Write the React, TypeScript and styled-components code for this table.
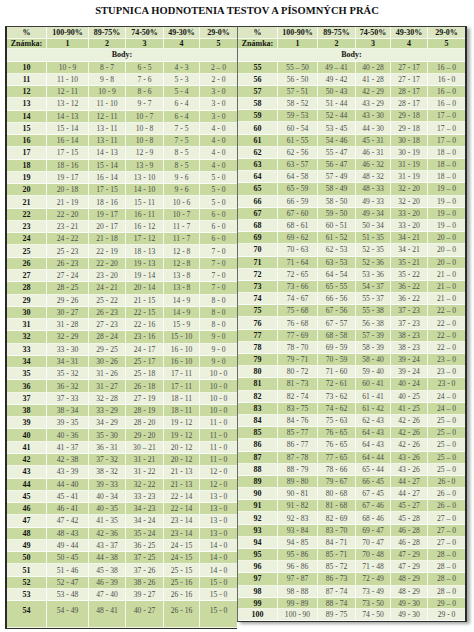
import React from "react";
import styled, { createGlobalStyle } from "styled-components";

const Global = createGlobalStyle`
  html, body { margin: 0; padding: 0; background: #ffffff; }
  body { font-family: "Liberation Serif", "Times New Roman", serif; }
`;

type R = [string, string, string, string, string, string];

const leftRows: R[] = [
  ["10", "10 - 9", "8 - 7", "6 - 5", "4 - 3", "2 – 0"],
  ["11", "11 - 10", "9 - 8", "7 - 6", "5 - 3", "2 - 0"],
  ["12", "12 - 11", "10 - 9", "8 - 6", "5 - 4", "3 - 0"],
  ["13", "13 - 12", "11 - 10", "9 - 7", "6 - 4", "3 - 0"],
  ["14", "14 - 13", "12 - 11", "10 - 7", "6 - 4", "3 - 0"],
  ["15", "15 - 14", "13 - 11", "10 - 8", "7 - 5", "4 - 0"],
  ["16", "16 - 14", "13 - 11", "10 - 8", "7 - 5", "4 - 0"],
  ["17", "17 - 15", "14 - 13", "12 - 9", "8 - 5", "4 - 0"],
  ["18", "18 - 16", "15 - 14", "13 - 9", "8 - 5", "4 - 0"],
  ["19", "19 - 17", "16 - 14", "13 - 10", "9 - 6", "5 - 0"],
  ["20", "20 - 18", "17 - 15", "14 - 10", "9 - 6", "5 - 0"],
  ["21", "21 - 19", "18 - 16", "15 - 11", "10 - 6", "5 - 0"],
  ["22", "22 - 20", "19 - 17", "16 - 11", "10 - 7", "6 - 0"],
  ["23", "23 - 21", "20 - 17", "16 - 12", "11 - 7", "6 - 0"],
  ["24", "24 - 22", "21 - 18", "17 - 12", "11 - 7", "6 - 0"],
  ["25", "25 - 23", "22 - 19", "18 - 13", "12 - 8", "7 - 0"],
  ["26", "26 - 23", "22 - 20", "19 - 13", "12 - 8", "7 - 0"],
  ["27", "27 - 24", "23 - 20", "19 - 14", "13 - 8", "7 - 0"],
  ["28", "28 - 25", "24 - 21", "20 - 14", "13 - 8", "7 - 0"],
  ["29", "29 - 26", "25 - 22", "21 - 15", "14 - 9", "8 - 0"],
  ["30", "30 - 27", "26 - 23", "22 - 15", "14 - 9", "8 - 0"],
  ["31", "31 - 28", "27 - 23", "22 - 16", "15 - 9", "8 - 0"],
  ["32", "32 - 29", "28 - 24", "23 - 16", "15 - 10", "9 - 0"],
  ["33", "33 - 30", "29 - 25", "24 - 17", "16 - 10", "9 - 0"],
  ["34", "34 - 31", "30 - 26", "25 - 17", "16 - 10", "9 - 0"],
  ["35", "35 - 32", "31 - 26", "25 - 18", "17 - 11", "10 - 0"],
  ["36", "36 - 32", "31 - 27", "26 - 18", "17 - 11", "10 - 0"],
  ["37", "37 - 33", "32 - 28", "27 - 19", "18 - 11", "10 - 0"],
  ["38", "38 - 34", "33 - 29", "28 - 19", "18 - 11", "10 - 0"],
  ["39", "39 - 35", "34 - 29", "28 - 20", "19 - 12", "11 - 0"],
  ["40", "40 - 36", "35 - 30", "29 - 20", "19 - 12", "11 - 0"],
  ["41", "41 - 37", "36 - 31", "30 – 21", "20 - 12", "11 - 0"],
  ["42", "42 - 38", "37 - 32", "31 - 21", "20 - 12", "11 - 0"],
  ["43", "43 - 39", "38 - 32", "31 - 22", "21 - 13", "12 - 0"],
  ["44", "44 - 40", "39 - 33", "32 - 22", "21 - 13", "12 - 0"],
  ["45", "45 - 41", "40 - 34", "33 - 23", "22 - 14", "13 - 0"],
  ["46", "46 - 41", "40 - 35", "34 - 23", "22 - 14", "13 - 0"],
  ["47", "47 - 42", "41 - 35", "34 - 24", "23 - 14", "13 - 0"],
  ["48", "48 - 43", "42 - 36", "35 - 24", "23 - 14", "13 - 0"],
  ["49", "49 - 44", "43 - 37", "36 - 25", "24 - 15", "14 - 0"],
  ["50", "50 - 45", "44 - 38", "37 - 25", "24 - 15", "14 - 0"],
  ["51", "51 - 46", "45 - 38", "37 - 26", "25 - 15", "14 - 0"],
  ["52", "52 - 47", "46 - 39", "38 - 26", "25 - 16", "15 - 0"],
  ["53", "53 - 48", "47 - 40", "39 - 27", "26 - 16", "15 - 0"],
  ["54", "54 - 49", "48 - 41", "40 - 27", "26 - 16", "15 - 0"],
];

const rightRows: R[] = [
  ["55", "55 – 50", "49 – 41", "40 - 28", "27 - 17", "16 – 0"],
  ["56", "56 - 50", "49 - 42", "41 - 28", "27 - 17", "16 - 0"],
  ["57", "57 - 51", "50 - 43", "42 - 29", "28 - 17", "16 – 0"],
  ["58", "58 - 52", "51 - 44", "43 - 29", "28 - 17", "16 – 0"],
  ["59", "59 - 53", "52 - 44", "43 - 30", "29 - 18", "17 – 0"],
  ["60", "60 - 54", "53 - 45", "44 - 30", "29 - 18", "17 – 0"],
  ["61", "61 - 55", "54 - 46", "45 - 31", "30 - 18", "17 – 0"],
  ["62", "62 - 56", "55 - 47", "46 - 31", "30 - 19", "18 – 0"],
  ["63", "63 - 57", "56 - 47", "46 - 32", "31 - 19", "18 – 0"],
  ["64", "64 - 58", "57 - 49", "48 - 32", "31 - 19", "18 – 0"],
  ["65", "65 - 59", "58 - 49", "48 - 33", "32 - 20", "19 – 0"],
  ["66", "66 - 59", "58 - 50", "49 - 33", "32 - 20", "19 – 0"],
  ["67", "67 - 60", "59 - 50", "49 - 34", "33 - 20", "19 – 0"],
  ["68", "68 - 61", "60 - 51", "50 - 34", "33 - 20", "19 – 0"],
  ["69", "69 - 62", "61 - 52", "51 - 35", "34 - 21", "20 – 0"],
  ["70", "70 - 63", "62 - 53", "52 - 35", "34 - 21", "20 – 0"],
  ["71", "71 - 64", "63 - 53", "52 - 36", "35 - 21", "20 – 0"],
  ["72", "72 - 65", "64 - 54", "53 - 36", "35 - 22", "21 – 0"],
  ["73", "73 - 66", "65 - 55", "54 - 37", "36 - 22", "21 – 0"],
  ["74", "74 - 67", "66 - 56", "55 - 37", "36 - 22", "21 – 0"],
  ["75", "75 - 68", "67 - 56", "55 - 38", "37 - 23", "22 – 0"],
  ["76", "76 - 68", "67 - 57", "56 - 38", "37 - 23", "22 – 0"],
  ["77", "77 - 69", "68 - 58", "57 - 39", "38 - 23", "22 – 0"],
  ["78", "78 - 70", "69 - 59", "58 - 39", "38 - 23", "22 – 0"],
  ["79", "79 - 71", "70 - 59", "58 - 40", "39 - 24", "23 – 0"],
  ["80", "80 - 72", "71 - 60", "59 - 40", "39 - 24", "23 – 0"],
  ["81", "81 - 73", "72 - 61", "60 - 41", "40 - 24", "23 - 0"],
  ["82", "82 - 74", "73 - 62", "61 - 41", "40 - 25", "24 – 0"],
  ["83", "83 - 75", "74 - 62", "61 - 42", "41 - 25", "24 – 0"],
  ["84", "84 - 76", "75 - 63", "62 - 43", "42 - 26", "25 – 0"],
  ["85", "85 - 77", "76 - 65", "64 - 43", "42 - 26", "25 – 0"],
  ["86", "86 - 77", "76 - 65", "64 - 43", "42 - 26", "25 – 0"],
  ["87", "87 - 78", "77 - 65", "64 - 44", "43 - 26", "25 – 0"],
  ["88", "88 - 79", "78 - 66", "65 - 44", "43 - 26", "25 – 0"],
  ["89", "89 - 80", "79 - 67", "66 - 45", "44 - 27", "26 - 0"],
  ["90", "90 - 81", "80 - 68", "67 - 45", "44 - 27", "26 – 0"],
  ["91", "91 - 82", "81 - 68", "67 - 46", "45 - 27", "26 – 0"],
  ["92", "92 - 83", "82 - 69", "68 - 46", "45 - 28", "27 – 0"],
  ["93", "93 - 84", "83 - 70", "69 - 47", "46 - 28", "27 – 0"],
  ["94", "94 - 85", "84 - 71", "70 - 47", "46 - 28", "27 – 0"],
  ["95", "95 - 86", "85 - 71", "70 - 48", "47 - 29", "28 – 0"],
  ["96", "96 - 86", "85 - 72", "71 - 48", "47 - 29", "28 – 0"],
  ["97", "97 - 87", "86 - 73", "72 - 49", "48 - 29", "28 – 0"],
  ["98", "98 - 88", "87 - 74", "73 - 49", "48 - 29", "28 – 0"],
  ["99", "99 - 89", "88 - 74", "73 - 50", "49 - 30", "29 – 0"],
  ["100", "100 - 90", "89 - 75", "74 - 50", "49 - 30", "29 - 0"],
];

const headers = ["%", "100-90%", "89-75%", "74-50%", "49-30%", "29-0%"];
const grades = ["Známka:", "1", "2", "3", "4", "5"];

const Page = styled.div`
  width: 474px;
  height: 632px;
  padding-top: 5px;
  box-sizing: border-box;
  overflow: hidden;
`;

const Title = styled.h1`
  margin: 0;
  text-align: center;
  font-family: "Liberation Serif", "Times New Roman", serif;
  font-weight: 700;
  font-size: 10.5px;
  line-height: 12px;
  color: #111;
  letter-spacing: 0.05px;
`;

const Tables = styled.div`
  display: flex;
  align-items: flex-start;
  margin-top: 9px;
  padding-left: 5px;
`;

const Table = styled.div<{ $side: "left" | "right" }>`
  display: flex;
  flex-direction: column;
  border-top: 1px solid #3c3c3c;
  border-bottom: 1.5px solid #2e2e2e;
  border-left: ${(p) => (p.$side === "left" ? "2px solid #2a2a2a" : "1px solid #6a6a6a")};
  border-right: ${(p) => (p.$side === "right" ? "2px solid #2a2a2a" : "none")};
  box-shadow: ${(p) => (p.$side === "right" ? "3px 2px 3px rgba(0,0,0,0.35)" : "none")};
`;

type Tone = "head" | "grade" | "body" | "dark" | "light";

const toneBg: Record<Tone, string> = {
  head: "#dce6c2",
  grade: "#c5d89e",
  body: "#eaf1dc",
  dark: "#c8da9f",
  light: "#ebf1dd",
};

const Row = styled.div<{ $cols: string; $h: number; $tone: Tone }>`
  display: grid;
  grid-template-columns: ${(p) => p.$cols};
  height: ${(p) => p.$h}px;
  box-sizing: border-box;
  background: ${(p) => toneBg[p.$tone]};
  border-bottom: 1px solid rgba(255, 255, 255, 0.75);
`;

const Cell = styled.div<{ $kind: "label" | "value" | "head" }>`
  display: flex;
  align-items: center;
  justify-content: center;
  border-right: 1px solid rgba(255, 255, 255, 0.8);
  font-family: "Liberation Serif", "Times New Roman", serif;
  white-space: nowrap;
  font-size: ${(p) => (p.$kind === "value" ? "7.6px" : "8px")};
  font-weight: ${(p) => (p.$kind === "value" ? 400 : 700)};
  color: ${(p) => (p.$kind === "value" ? "#4d4d4d" : "#141414")};
  &:last-child { border-right: none; }
`;

const LastCell = styled(Cell)`
  align-items: flex-start;
  padding-top: 5px;
`;

const SpanCell = styled.div`
  grid-column: 1 / -1;
  display: flex;
  align-items: center;
  justify-content: center;
  font-family: "Liberation Serif", "Times New Roman", serif;
  font-size: 8px;
  font-weight: 700;
  color: #141414;
`;

interface GradeTableProps {
  side: "left" | "right";
  cols: string;
  rows: R[];
  rowH: number;
  tailHeights: number[];
}

const GradeTable: React.FC<GradeTableProps> = ({ side, cols, rows, rowH, tailHeights }) => {
  const n = rows.length;
  const tailStart = n - tailHeights.length;
  return (
    <Table $side={side}>
      <Row $cols={cols} $h={11.5} $tone="head">
        {headers.map((h) => (
          <Cell key={h} $kind="head">{h}</Cell>
        ))}
      </Row>
      <Row $cols={cols} $h={10.5} $tone="grade">
        {grades.map((g) => (
          <Cell key={g} $kind="head">{g}</Cell>
        ))}
      </Row>
      <Row $cols={cols} $h={12.5} $tone="body">
        <SpanCell>Body:</SpanCell>
      </Row>
      {rows.map((r, i) => {
        const h = i >= tailStart ? tailHeights[i - tailStart] : rowH;
        const tall = h > 20;
        const C = tall ? LastCell : Cell;
        return (
          <Row key={r[0]} $cols={cols} $h={h} $tone={i % 2 === 0 ? "dark" : "light"}>
            {r.map((v, j) => (
              <C key={j} $kind={j === 0 ? "label" : "value"}>{v}</C>
            ))}
          </Row>
        );
      })}
    </Table>
  );
};

export default function App() {
  return (
    <>
      <Global />
      <Page>
        <Title>STUPNICA HODNOTENIA TESTOV A PÍSOMNÝCH PRÁC</Title>
        <Tables>
          <GradeTable
            side="left"
            cols="40px 42px 37px 38px 36px 37px"
            rows={leftRows}
            rowH={12.27}
            tailHeights={[27]}
          />
          <GradeTable
            side="right"
            cols="40px 40px 38px 35px 37px 37px"
            rows={rightRows}
            rowH={12.2}
            tailHeights={[11.5, 11.5]}
          />
        </Tables>
      </Page>
    </>
  );
}
